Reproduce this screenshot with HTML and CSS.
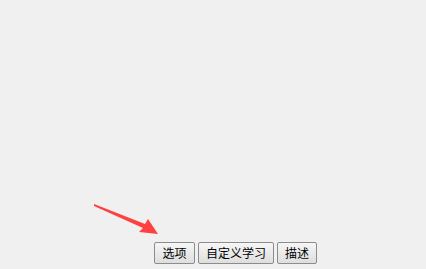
FILE: index.html
```html
<!DOCTYPE html>
<html lang="zh">
<head>
<meta charset="utf-8">
<link rel="stylesheet" href="styles.css">
</head>
<body>
<div class="window">
  <svg class="arrow" width="426" height="269" viewBox="0 0 426 269">
    <polygon points="94,204 145,224 148,219 158,234 139,232 143,228 94,206" fill="#ff4040"/>
  </svg>
  <div class="buttons">
    <button class="btn btn-short">选项</button>
    <button class="btn btn-long">自定义学习</button>
    <button class="btn btn-short btn-last">描述</button>
  </div>
</div>
</body>
</html>
```

FILE: styles.css
```css
html, body {
  margin: 0;
  padding: 0;
  background: #f0f0f0;
}
.window {
  position: relative;
  width: 426px;
  height: 269px;
  display: flex;
  flex-direction: column;
  justify-content: flex-end;
}
.arrow {
  position: absolute;
  left: 0;
  top: 0;
}
.buttons {
  display: flex;
  gap: 3px;
  padding-left: 154px;
  padding-bottom: 5px;
}
.btn {
  height: 22px;
  margin: 0;
  padding: 0;
  font-family: "Noto Sans CJK SC", "Noto Sans", sans-serif;
  font-size: 12px;
  line-height: 20px;
  color: #000;
  background: linear-gradient(#f6f6f6, #dedede);
  border: 1px solid #8c8c8c;
  border-radius: 2px;
  box-sizing: border-box;
}
.btn-short {
  width: 41px;
}
.btn-long {
  width: 76px;
}
.btn-last {
  width: 40px;
}
```
